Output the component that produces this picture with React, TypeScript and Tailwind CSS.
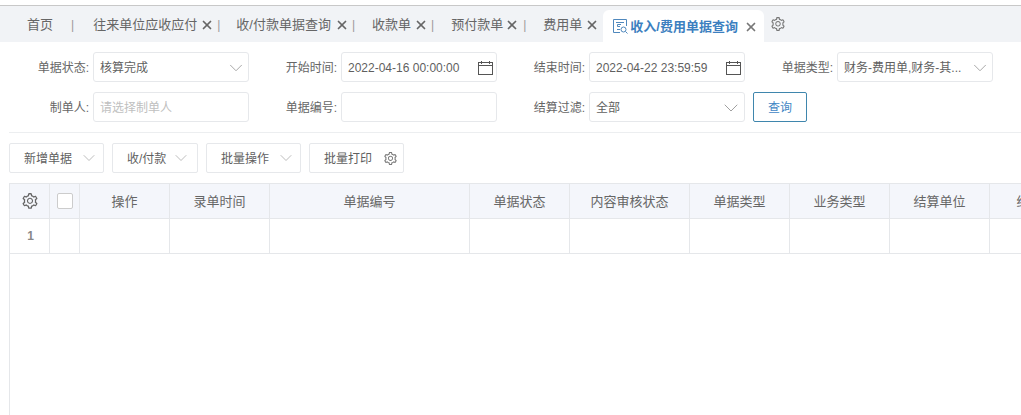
import { ChevronDown, X } from "lucide-react";
import { AiOutlineSetting } from "react-icons/ai";

const font = { fontFamily: '"Liberation Sans", "Noto Sans CJK SC", sans-serif' };

const tabs = [
  { label: "往来单位应收应付", ml: "ml-[19px]", xMl: "ml-[3px]", barMl: "ml-[3px]" },
  { label: "收/付款单据查询", ml: "ml-[16px]", xMl: "ml-[4px]", barMl: "ml-[3px]" },
  { label: "收款单", ml: "ml-[17px]", xMl: "ml-[3px]", barMl: "ml-[3px]" },
  { label: "预付款单", ml: "ml-[17px]", xMl: "ml-[2px]", barMl: "ml-[4px]" },
];

const columns = [
  { label: "操作", w: "w-[90px]" },
  { label: "录单时间", w: "w-[100px]" },
  { label: "单据编号", w: "w-[200px]" },
  { label: "单据状态", w: "w-[100px]" },
  { label: "内容审核状态", w: "w-[120px]" },
  { label: "单据类型", w: "w-[100px]" },
  { label: "业务类型", w: "w-[100px]" },
  { label: "结算单位", w: "w-[100px]" },
  { label: "结算金额", w: "w-[106px]" },
];

function Calendar() {
  return (
    <svg width="15" height="14" viewBox="0 0 15 14" fill="none" stroke="#555" strokeWidth="1" className="mr-[2px]">
      <rect x="0.5" y="1.5" width="14" height="12" />
      <path d="M0.5 4.5H14.5M3.5 0V3M11.5 0V3" />
    </svg>
  );
}

function Field({ label, children, labelW }: { label: string; children?: React.ReactNode; labelW: string }) {
  return (
    <div className="flex items-center">
      <span className={`${labelW} shrink-0 text-right text-[12px] text-[#666] pr-[4px] pt-[2px]`}>{label}:</span>
      <div className="w-[156px] h-[30px] flex items-center justify-between rounded-[3px] border border-[#e6e8eb] bg-white pl-[6px] pr-[1px] pt-[1px] text-[12px] text-[#5f5f5f]">
        {children}
      </div>
    </div>
  );
}

function Chevron({ size = 22 }: { size?: number }) {
  return <ChevronDown size={size} strokeWidth={1} className="text-[#a0a0a0]" />;
}

function ToolButton({ label, w, gap }: { label: string; w: string; gap: string }) {
  return (
    <div className={`${w} h-[30px] flex items-center pl-[14px] border border-[#e6e8eb] rounded-[2px] text-[12px] text-[#5f5f5f]`}>
      <span className="pt-[2px]">{label}</span>
      <ChevronDown size={20} strokeWidth={1} className={`${gap} text-[#b0b0b0]`} />
    </div>
  );
}

export default function App() {
  return (
    <div style={font} className="w-[1021px] h-[415px] overflow-hidden bg-white">
      {/* tab bar */}
      <div className="h-[5px]" />
      <div className="h-[37px] border-t border-[#c8c8c8] bg-[#f1f3f6] flex items-end text-[13px] text-[#666]">
        <div className="h-[36px] pt-[2px] flex items-center pl-[27px] shrink-0">
          <span>首页</span>
          <span className="ml-[18px] text-[#999] text-[12px]">|</span>
        </div>
        {tabs.map((t) => (
          <div key={t.label} className={`${t.ml} h-[36px] pt-[2px] shrink-0 flex items-center`}>
            <span>{t.label}</span>
            <X size={14} strokeWidth={3} className={`${t.xMl} text-[#666]`} />
            <span className={`${t.barMl} text-[#999] text-[12px]`}>|</span>
          </div>
        ))}
        <div className="ml-[17px] h-[36px] pt-[2px] shrink-0 flex items-center">
          <span>费用单</span>
          <X size={14} strokeWidth={3} className="ml-[3px] text-[#666]" />
        </div>
        <div className="ml-[4px] w-[161px] h-[32px] pt-[1px] shrink-0 bg-white rounded-t-[6px] flex items-center pl-[10px] text-[#3c7fc0] font-semibold">
          <svg width="15" height="15" viewBox="0 0 15 15" fill="none" stroke="#4f88bd" strokeWidth="1">
            <path d="M7 13.5H0.5V0.5H13.5V7" />
            <path d="M3 3.5H11M8 5.5H4.5V7.5H7M4 10.5H7" />
            <circle cx="10.5" cy="10.5" r="2.5" />
            <path d="M12.5 12.5L14.5 14.5" />
          </svg>
          <span className="ml-[2px]">收入/费用单据查询</span>
          <X size={14} strokeWidth={3} className="ml-[6px] text-[#777]" />
        </div>
        <div className="h-[36px] flex items-center ml-[6px]">
          <AiOutlineSetting size={16} className="text-[#777]" />
        </div>
      </div>

      {/* filter form */}
      <div className="pt-[10px] h-[91px] flex flex-col gap-[10px] border-b border-[#eceef0] ml-[9px]">
        <div className="flex">
          <Field label="单据状态" labelW="w-[84px]">
            <span>核算完成</span>
            <Chevron />
          </Field>
          <div className="ml-[36px]">
            <Field label="开始时间" labelW="w-[56px]">
              <span>2022-04-16 00:00:00</span>
              <Calendar />
            </Field>
          </div>
          <div className="ml-[36px]">
            <Field label="结束时间" labelW="w-[56px]">
              <span>2022-04-22 23:59:59</span>
              <Calendar />
            </Field>
          </div>
          <div className="ml-[36px]">
            <Field label="单据类型" labelW="w-[56px]">
              <span>财务-费用单,财务-其...</span>
              <Chevron />
            </Field>
          </div>
        </div>
        <div className="flex">
          <Field label="制单人" labelW="w-[84px]">
            <span className="text-[#c0c0c0]">请选择制单人</span>
          </Field>
          <div className="ml-[36px]">
            <Field label="单据编号" labelW="w-[56px]" />
          </div>
          <div className="ml-[36px]">
            <Field label="结算过滤" labelW="w-[56px]">
              <span>全部</span>
              <Chevron size={24} />
            </Field>
          </div>
          <button className="ml-[8px] w-[54px] h-[30px] pt-[2px] rounded-[2px] border border-[#3f86ad] text-[12px] text-[#3f86c4] bg-white">
            查询
          </button>
        </div>
      </div>

      {/* toolbar */}
      <div className="pl-[9px] pt-[10px] flex gap-[8px]">
        <ToolButton label="新增单据" w="w-[95px]" gap="ml-[7px]" />
        <ToolButton label="收/付款" w="w-[86px]" gap="ml-[5px]" />
        <ToolButton label="批量操作" w="w-[95px]" gap="ml-[7px]" />
        <div className="w-[95px] h-[30px] flex items-center pl-[14px] border border-[#e6e8eb] rounded-[2px] text-[12px] text-[#5f5f5f]">
          <span className="pt-[2px]">批量打印</span>
          <AiOutlineSetting size={15} className="ml-[11px] text-[#777]" />
        </div>
      </div>

      {/* table */}
      <div className="ml-[9px] mt-[10px] h-[232px] border-l border-[#e5e7ea]">
        <div className="flex h-[36px] border-y border-[#e5e7ea] bg-[#f4f6fb] text-[13px] text-[#666]">
          <div className="w-[40px] shrink-0 flex items-center justify-center border-r border-[#e5e7ea]">
            <AiOutlineSetting size={18} className="text-[#666]" />
          </div>
          <div className="w-[30px] shrink-0 flex items-center justify-center border-r border-[#e5e7ea]">
            <div className="w-[16px] h-[16px] bg-white border border-[#ccc] rounded-[2px]" />
          </div>
          {columns.map((c) => (
            <div key={c.label} className={`${c.w} shrink-0 pt-[2px] flex items-center justify-center border-r border-[#e5e7ea]`}>
              {c.label}
            </div>
          ))}
        </div>
        <div className="flex h-[35px] border-b border-[#e5e7ea] text-[12px] text-[#888]">
          <div className="w-[40px] shrink-0 pl-[2px] flex items-center justify-center font-semibold border-r border-[#e5e7ea]">1</div>
          <div className="w-[30px] shrink-0 border-r border-[#e5e7ea]" />
          {columns.map((c) => (
            <div key={c.label} className={`${c.w} shrink-0 border-r border-[#e5e7ea]`} />
          ))}
        </div>
      </div>
    </div>
  );
}
